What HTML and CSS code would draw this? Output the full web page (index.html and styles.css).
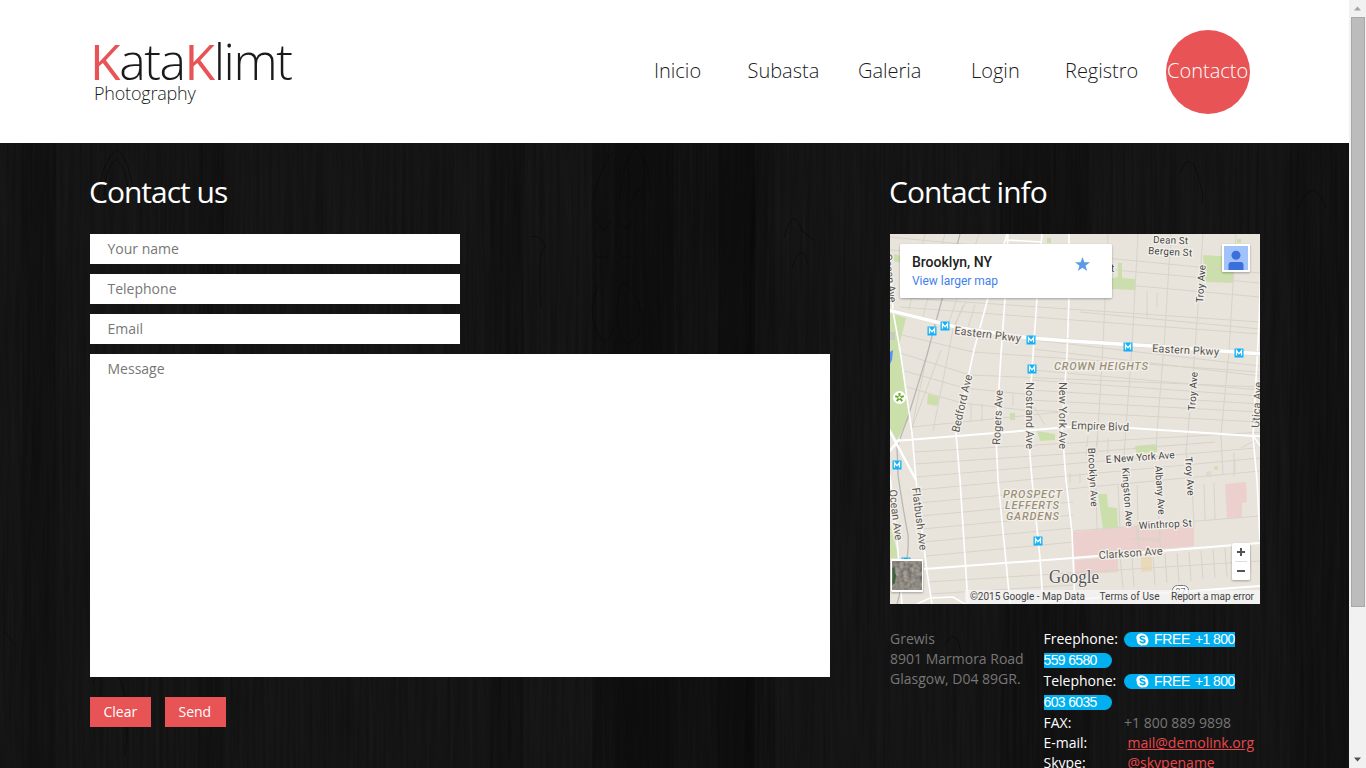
FILE: index.html
```html
<!DOCTYPE html>
<html lang="es">
<head>
<meta charset="utf-8">
<title>KataKlimt Photography</title>
<link rel="stylesheet" href="styles.css">
</head>
<body>
<div class="window">
<div class="page">
<header class="header">
  <a class="logo"><span class="logo-name"><b>K</b>ata<b>K</b>limt</span><span class="logo-sub">Photography</span></a>
  <nav class="nav">
    <a class="n1">Inicio</a><a class="n2">Subasta</a><a class="n3">Galeria</a><a class="n4">Login</a><a class="n5">Registro</a><a class="active">Contacto</a>
  </nav>
</header>
<main class="content">
  <svg class="wood" width="1349" height="625" aria-hidden="true">
    <filter id="grain" x="0" y="0" width="100%" height="100%" color-interpolation-filters="sRGB">
      <feTurbulence type="fractalNoise" baseFrequency="0.3 0.008" numOctaves="3" seed="8"/>
      <feColorMatrix values="0.04 0 0 0 0.06  0.04 0 0 0 0.06  0.04 0 0 0 0.06  0 0 0 0 1"/>
    </filter>
    <rect width="1349" height="625" filter="url(#grain)"/>
    <g fill="#000">
      <path opacity=".12" d="M22 0h34v625H22zM198 0h26v625h-26zM490 0h34v625h-34zM745 0h30v625h-30zM1000 0h90v625h-90zM1290 0h59v625h-59z"/>
      <path opacity=".16" d="M592 0h82v625h-82zM718 0h37v625h-37z"/>
      <path opacity=".12" d="M615 0h140v625H615z"/>
    </g>
    <g fill="none" stroke="#080808" stroke-width=".8" opacity=".75">
      <path d="M98 54q4-36 19-48q14 13 16 45M104 52q1-29 13-36q11 12 11 36M593 55Q604 15 614 9M620 55Q624 14 636 3Q650 20 651 55M630 61l9-15 7 15M596 76q8 20 15 0M618 75q8 20 15 0M595 112q9 5 15 0M619 112q9 5 15 0M598 142q-14 33 6 58q10-8 9-18M622 140q-14 40 6 61q16-8 14-31q-10-29-20-30M784 95q9-35 18-7l13 10M792 125q10-30 16-3M530 94q11-4 15 10q-8 3-4 60M93 540q11-43 24-10q15 29 8 82M4 488l11 14M945 501q14-22 17 20M1180 30q9-23 17 0t5 30M1298 65q15-35 28 0"/>
    </g>
  </svg>
  <section class="form-col">
    <h2>Contact us</h2>
    <form class="form">
      <div class="field">Your name</div>
      <div class="field">Telephone</div>
      <div class="field">Email</div>
      <div class="field area">Message</div>
      <div class="buttons"><a class="btn">Clear</a><a class="btn">Send</a></div>
    </form>
  </section>
  <section class="info-col">
    <h2>Contact info</h2>
    <svg class="map" width="370" height="370" viewBox="890 234 370 370">
      <defs>
        <g id="metro"><rect x="-4.5" y="-4.5" width="9" height="9" fill="#12b2f7"/><path d="M-2.5 2.6v-5L0 .8l2.500-3.200v5" fill="none" stroke="#fff" stroke-width="1.300"/></g>
      </defs>
      <path fill="#e8e4dc" d="M890 234h370v370H890z"/>
      <path fill="#cadfaa" d="M890 313l16 5-8 32h2l10 67-13 23-7-12zM894 254l7 2v7l-7-2zM928 394l11 3-2 9-10-2zM1010 413h5v7h-5zM1037 431l18 3v6l-15 1zM1118 263l4 0v15l13 1v11l-23-1v-11l6-1zM1203 255l30 2v26l-28-1zM1237 239h4v4h-4zM1047 238h4v5h-4zM1135 446l22-2v8l-21 1zM1098 494h9l1 13 9 1 1 20-15 1zM890 525l9 33h-9z"/>
      <circle cx="1216" cy="468" r="2" fill="#cadfaa"/>
      <path fill="#c9c7c2" d="M890 332h5v8h-5z"/>
      <path fill="#5b8ff5" d="M890 352l3-2-1 10-2 4z"/>
      <path fill="#ebd0ce" d="M1073 532l64-6h57v20l-121 11zM1075 560l43-3v15l-43 3zM1225 484l21-2 1 20-5 1v14l-15 1z"/>
      <path fill="#e9d9b9" d="M1141 557h11v14l-11 1z"/>
      <path fill="#dedad0" d="M1206 472l5-1 1 6h-6z"/>
      <g class="minor">
        <path d="M925 234l-16 76M945 234l-23 86M979 234l-30 88M1108 234l-5 111-5 85 -2 20M1138 234l-6 113-6 80-2 30M1171 234l-7 112-7 86-1 20M1203 234l-8 116-7 82-2 20 2 15M1236 234l-7 117-8 84 2 40"/>
        <path d="M928 350l-17 82M941 350l-29 78M953 330l-20 101M963 305l-8 21M975 305l-7 23M966 302l-14 28M971 404v18M982 404v18M1013 393v13M1034 407l11 18M1147 291v28M1157 293v14"/>
        <path d="M890 237l370 36M890 250l370 33M903 265l357 32M906 298l354 24M900 307l360 27M1080 312l180 17"/>
        <path d="M898 334l75 18 287 20M900 353l70 22 290 12M905 371l59 17 70 7M907 387l55 16 70 8M912 427l150-15M1034 340l226 26M1033 349l227 27M1032 370l228 20M1031 380l229 16M1030 390l230 14M1029 400l231 12M1028 410l232 12"/>
        <path d="M914 452l350-20M915 464l150-10 150-12M916 477l340-29M917 490l343-32M919 503l341-32M920 516l153-14M922 529l151-14M924 542l149-14M926 556l148-14M928 582l332-21M930 594l144-9M1073 531l187-15"/>
        <path d="M1088 436l-2 20M1098 437l-2 18M1108 438v15M1070 473v10M1080 473v10M1096 488l1 42M1118 486l2 42M1137 485l2 70M1157 482l4 72M1192 484l2 43M1204 484l1 36M1214 483l1 36M1234 453v24M1235 461v10M1120 556l3 32M1132 556l2 31M1153 555l2 30M1165 554l2 29M1177 553l2 29M1189 552l2 29M1201 551l2 28M1213 549l2 29M1225 548l2 29M1250 545l1 28M1241 448l15-8M1137 527v12l23 2v-15M1131 539l29 0"/>
      </g>
      <path class="rail" d="M960 234l-25 91-8 30-19 62-11 30 1 28q5 34 10 60 2 23-11 69"/>
      <g class="major">
        <path d="M1007 234l-19 64-14 52-18 83 4 47 8 124M1008 234l-3 64-4 56-5 83 2 43 8 82 4 42M1042 234l-5 64-4 57-5 75 4 50 8 78 3 46M1069 234v64l-2 57-5 72 4 53 6 52 3 72M1006 240l36 2"/>
        <path d="M891 277l2 34 7 39 12 83 4 47 11 92 5 32M890 475l7 65 5 64M917 604l13-6 23-1 12 7M1262 234l-3 90-6 113 4 43 3 60M1254 437l9 13"/>
        <path stroke-width="2" d="M895 441l62-5 113-9 60 1 123 8h10M924 569l149-11 187-15M1040 602l220-16"/>
        <path stroke-width="2.500" d="M888 428l28 52M888 453l12-14"/>
        <path stroke="#dedad1" stroke-width="4.500" d="M888 310l72 18 70 10 40 3 82 5 110 8"/>
        <path stroke-width="3.500" d="M888 310l72 18 70 10 40 3 82 5 110 8"/>
      </g>
      <g class="labels">
        <text x="1153" y="243" textLength="35" transform="rotate(2 1153 243)">Dean St</text>
        <text x="1148" y="254" textLength="44" transform="rotate(3 1148 254)">Bergen St</text>
        <text x="1111" y="272">t</text>
        <text transform="translate(1203 303) rotate(-86)" textLength="38">Troy Ave</text>
        <text transform="translate(1195 411) rotate(-86)" textLength="39">Troy Ave</text>
        <text transform="translate(954 334) rotate(7)" textLength="67" class="big">Eastern Pkwy</text>
        <text transform="translate(1152 352) rotate(3)" textLength="67" class="big">Eastern Pkwy</text>
        <text transform="translate(1071 429) rotate(2)" textLength="58" class="big">Empire Blvd</text>
        <text transform="translate(959 433) rotate(-77)" textLength="59" class="big">Bedford Ave</text>
        <text transform="translate(1000 445) rotate(-87)" textLength="55" class="big">Rogers Ave</text>
        <text transform="translate(1026 382) rotate(90)" textLength="67" class="big">Nostrand Ave</text>
        <text transform="translate(1059 382) rotate(90)" textLength="67" class="big">New York Ave</text>
        <text transform="translate(1259 428) rotate(-86)" textLength="46" class="big">Utica Ave</text>
        <text transform="translate(912 488) rotate(83)" textLength="63" class="big">Flatbush Ave</text>
        <text transform="translate(889 490) rotate(83)" textLength="51" class="big">Ocean Ave</text>
        <text transform="translate(884 254) rotate(84)" textLength="49" class="big">Ocean Ave</text>
        <text transform="translate(1106 463) rotate(-4)" textLength="69">E New York Ave</text>
        <text transform="translate(1088 448) rotate(87)" textLength="59">Brooklyn Ave</text>
        <text transform="translate(1122 468) rotate(86)" textLength="59">Kingston Ave</text>
        <text transform="translate(1155 466) rotate(86)" textLength="49">Albany Ave</text>
        <text transform="translate(1185 457) rotate(86)" textLength="39">Troy Ave</text>
        <text transform="translate(1139 529) rotate(-3)" textLength="53">Winthrop St</text>
        <text transform="translate(1099 559) rotate(-4)" textLength="64" class="big">Clarkson Ave</text>
        <g class="area-label">
          <text x="1054" y="370" textLength="94">CROWN HEIGHTS</text>
          <text x="1003" y="498" textLength="59">PROSPECT</text>
          <text x="1005" y="509" textLength="54">LEFFERTS</text>
          <text x="1006" y="520" textLength="53">GARDENS</text>
        </g>
      </g>
      <use href="#metro" x="945" y="326"/><use href="#metro" x="932" y="331"/><use href="#metro" x="1031" y="340"/><use href="#metro" x="1128" y="347"/><use href="#metro" x="1239" y="353"/><use href="#metro" x="1032" y="369"/><use href="#metro" x="897" y="465"/><use href="#metro" x="1038" y="541"/><use href="#metro" x="906" y="562"/>
      <circle cx="899.500" cy="397.500" r="6.500" fill="#fff"/>
      <path d="M899.500 397.500v-4.500M899.500 397.500l4.300-1.400M899.500 397.500l2.700 3.600M899.500 397.500l-2.700 3.600M899.500 397.500l-4.300-1.400" stroke="#6aaa2c" stroke-width="2"/>
      <circle cx="899.500" cy="397.500" r="1.200" fill="#fff"/>
      <rect x="1172.500" y="585.500" width="16" height="12" rx="5" fill="#fff" stroke="#777"/>
      <text x="1175.500" y="595" class="shield">27</text>
      <text x="1049" y="583" textLength="50" lengthAdjust="spacingAndGlyphs" class="google">Google</text>
      <path fill="#f5f5f5" opacity=".75" d="M965 590h295v14H965z"/>
      <g class="credits">
        <text x="970" y="600" textLength="115">©2015 Google - Map Data</text>
        <text x="1099.500" y="600" textLength="60">Terms of Use</text>
        <text x="1171" y="600" textLength="83">Report a map error</text>
      </g>
      <g class="raised">
        <rect x="900" y="244" width="212" height="54" rx="1.500" fill="#fff"/>
        <rect x="1222" y="244" width="28" height="28" rx="1" fill="#fff"/>
        <rect x="891" y="559" width="32" height="33" rx="1" fill="#fff"/>
        <rect x="1232" y="543" width="18" height="37" rx="1.500" fill="#fff"/>
      </g>
      <text x="912" y="267" textLength="80" class="place">Brooklyn, NY</text>
      <text x="912" y="285" textLength="86" class="larger">View larger map</text>
      <path fill="#5c9ae4" d="M1082.500 257l1.900 5.300h5.600l-4.500 3.400 1.700 5.400-4.700-3.300-4.700 3.300 1.700-5.400-4.500-3.400h5.600z"/>
      <path fill="#a1c2fa" d="M1224 246h24v24h-24z"/>
      <circle cx="1236" cy="255.300" r="4.500" fill="#3b6fdb"/>
      <path fill="#3b6fdb" d="M1228.500 270v-5q0-3 3-3h9q3 0 3 3v5z"/>
      <filter id="earth" x="0" y="0" width="100%" height="100%" color-interpolation-filters="sRGB"><feTurbulence type="fractalNoise" baseFrequency=".25" numOctaves="3" seed="3"/><feColorMatrix values=".35 0 0 0 .38 .35 0 0 0 .36 .35 0 0 0 .33 0 0 0 0 1"/></filter>
      <rect x="892.500" y="561" width="29" height="29" filter="url(#earth)"/>
      <path fill="#3c6340" d="M892.500 568l2-1 0 4 1.500 4-1 8-2.500 2z"/>
      <path d="M1237 552h8M1241 548v8M1237 571h8" stroke="#555" stroke-width="2"/>
      <path d="M1235 561.500h12" stroke="#ddd"/>
    </svg>
    <div class="details">
      <address>Grewis<br>8901 Marmora Road<br>Glasgow, D04 89GR.</address>
      <div class="phones">
        <div class="tall"><span class="key">Freephone:</span><span class="sk start"><svg width="13" height="13" viewBox="0 0 13 13"><path fill="#fff" d="M4 .5C7 0 12 1.500 12.200 6.300c.8 2.500-.6 6.500-4.500 6C4 13 .8 10.500.8 6.900C-.5 4 1 .8 4 .5z"/><path fill="none" stroke="#00aff0" stroke-width="1.600" d="M8.900 4.400C8 2.800 4.200 2.900 4.200 4.800c0 2 4.800 1.100 4.800 3.200C9 10.200 4.700 10 4 8.300"/></svg><span class="free">FREE</span><span class="num">+1 800</span></span></div>
        <div class="tall"><span class="sk end">559 6580</span></div>
        <div class="tall"><span class="key">Telephone:</span><span class="sk start"><svg width="13" height="13" viewBox="0 0 13 13"><path fill="#fff" d="M4 .5C7 0 12 1.500 12.200 6.300c.8 2.500-.6 6.500-4.500 6C4 13 .8 10.500.8 6.900C-.5 4 1 .8 4 .5z"/><path fill="none" stroke="#00aff0" stroke-width="1.600" d="M8.900 4.400C8 2.800 4.200 2.900 4.200 4.800c0 2 4.800 1.100 4.800 3.200C9 10.200 4.700 10 4 8.300"/></svg><span class="free">FREE</span><span class="num">+1 800</span></span></div>
        <div class="tall"><span class="sk end">603 6035</span></div>
        <div class="line"><span class="key">FAX:</span><span>+1 800 889 9898</span></div>
        <div class="line"><span class="key">E-mail:</span><a class="mail under">mail@demolink.org</a></div>
        <div class="line"><span class="key">Skype:</span><a class="mail">@skypename</a></div>
      </div>
    </div>
  </section>
</main>
</div>
<div class="scrollbar">
  <svg width="17" height="17"><path d="M5 10.500l3.500-4 3.500 4z" fill="#a3a3a3"/></svg>
  <div class="thumb"></div>
  <svg width="17" height="17"><path d="M5 6.500l3.500 4 3.500-4z" fill="#505050"/></svg>
</div>
</div>
</body>
</html>
```
FILE: styles.css
```css
* { box-sizing: border-box; }
body { margin: 0; font: 14px/20px "Open Sans", sans-serif; color: #777; background: #fff; overflow: hidden; }
.window { display: flex; width: 1366px; height: 768px; overflow: hidden; }
.page { width: 1349px; height: 768px; overflow: hidden; }
.header { height: 143px; padding: 30px 99px 0 90px; display: flex; justify-content: space-between; background: #fff; }
.logo { display: flex; flex-direction: column; color: #1a1a1a; font-weight: 300; }
.logo-name { font-size: 50px; line-height: 62px; letter-spacing: -1.45px; white-space: nowrap; }
.logo-name b { font-weight: 400; color: #e85356; }
.logo-sub { font-size: 18px; line-height: 20px; margin-top: -9px; padding-left: 4px; letter-spacing: -.2px; }
.nav { display: flex; font-size: 20px; line-height: 82px; font-weight: 300; color: #1a1a1a; }
.nav a { white-space: nowrap; }
.n1 { width: 93.5px; }
.n2 { width: 110.5px; }
.n3 { width: 113px; }
.n4 { width: 94px; }
.n5 { width: 101px; }
.nav .active { width: 84px; height: 84px; border-radius: 50%; background: #e85356; color: #fff; padding-left: 1px; }
.content { position: relative; height: 625px; padding: 29px 89px 0 90px; display: flex; gap: 60px; background: #141414; overflow: hidden; }
.wood { position: absolute; left: 0; top: 0; }
.form-col, .info-col { position: relative; }
.form-col { width: 740px; }
.info-col { width: 370px; }
h2 { margin: 0 0 22px -1px; font-size: 30px; line-height: 40px; font-weight: 400; letter-spacing: -1px; color: #fff; }
.form { display: flex; flex-direction: column; gap: 10px; }
.field { width: 370px; height: 30px; padding: 5px 17.5px; background: #fff; color: #777; }
.area { width: 740px; height: 323px; }
.buttons { display: flex; gap: 14px; padding-top: 10px; }
.btn { width: 61px; height: 30px; line-height: 30px; padding-left: 13.5px; background: #e85356; color: #fff; }
.map { display: block; }
.minor { fill: none; stroke: #d8d3c8; stroke-width: 1; }
.rail { fill: none; stroke: #bab8b4; stroke-width: 1.3; }
.major { fill: none; stroke: #fff; stroke-width: 1.6; }
.labels { font: 10px Roboto, sans-serif; fill: #444; stroke: #f3f0eb; stroke-width: 2.5px; paint-order: stroke; }
.big { font-size: 11px; fill: #5a5650; }
.area-label { font: italic 500 11px Roboto, sans-serif; fill: #9b9077; }
.shield { font: 9px Roboto, sans-serif; fill: #777; }
.google { font: 18px "Liberation Serif", serif; fill: #555; stroke: #f5f3ef; stroke-width: 1.5px; paint-order: stroke; }
.credits { font: 10px Roboto, sans-serif; fill: #444; }
.raised { filter: drop-shadow(0 1px 1px rgba(0, 0, 0, .3)); }
.place { font: 500 14px Roboto, sans-serif; fill: #222; }
.larger { font: 12px Roboto, sans-serif; fill: #427fed; }
.details { display: flex; padding-top: 25px; }
address { width: 153.5px; font-style: normal; white-space: nowrap; }
.phones { width: 216px; white-space: nowrap; }
.tall, .line { display: flex; }
.tall { height: 21px; }
.line { height: 20px; }
.key { width: 80.5px; color: #fff; }
.sk { display: flex; height: 15px; margin-top: 3px; background: #00aff0; color: #fff; font: 14px/15px "Liberation Sans", sans-serif; }
.start { width: 111px; border-radius: 8px 0 0 8px; padding-left: 12px; }
.start svg { margin-top: 1px; }
.free { width: 46px; padding-left: 5px; letter-spacing: -.3px; }
.num { letter-spacing: -.6px; }
.end { width: 68px; border-radius: 0 8px 8px 0; letter-spacing: -.65px; }
.mail { color: #e8484b; margin-left: 3.5px; }
.under { text-decoration: underline; }
.scrollbar { width: 17px; height: 768px; background: #f1f1f1; display: flex; flex-direction: column; }
.scrollbar svg { display: block; }
.thumb { width: 14px; height: 590px; margin: 0 0 144px 2px; background: #bcbcbc; border: 1px solid #a8a8a8; }
```
